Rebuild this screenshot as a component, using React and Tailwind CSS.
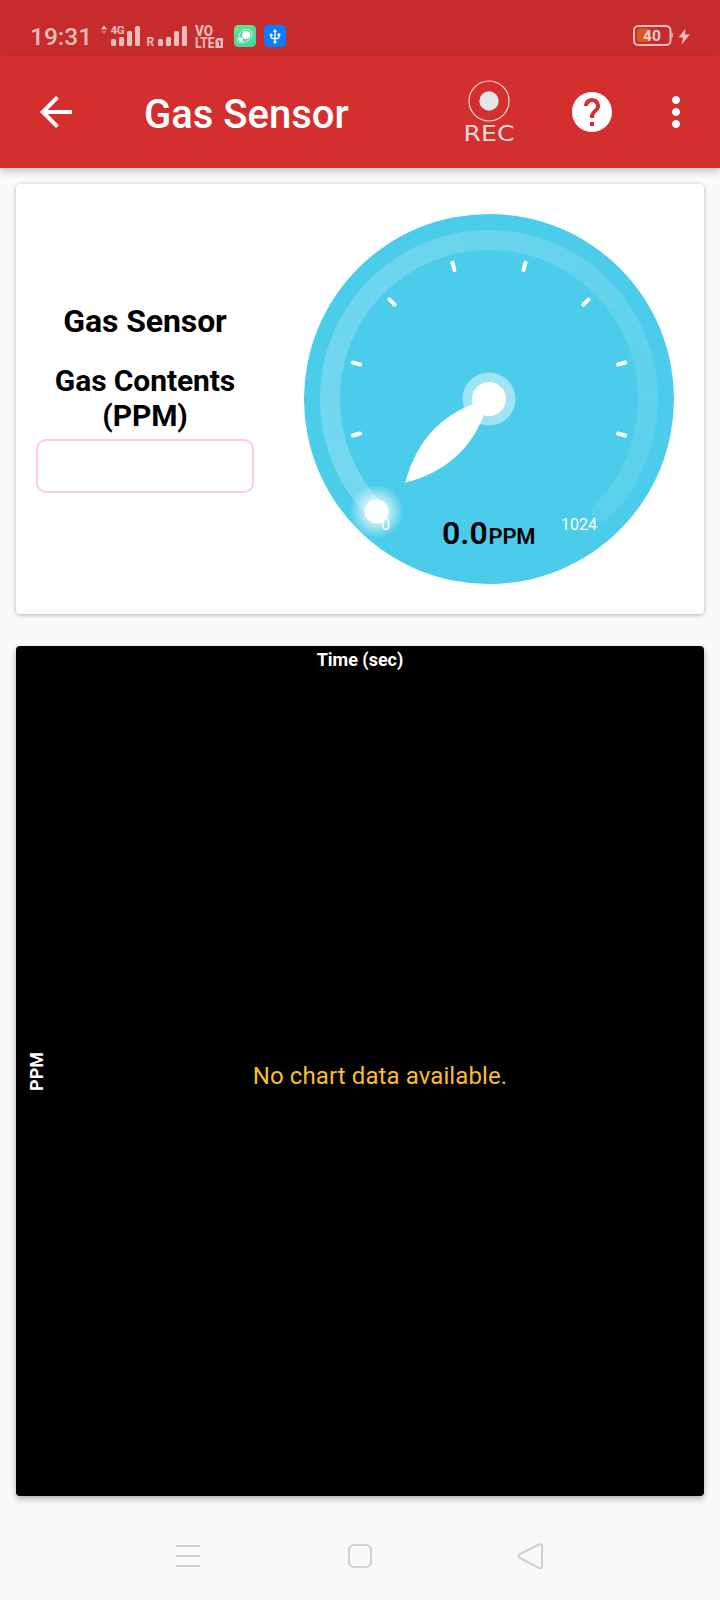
import React from "react";

const CX = 185;
const CY = 185;

function polar(r, deg) {
  const a = (deg * Math.PI) / 180;
  return [CX + r * Math.cos(a), CY + r * Math.sin(a)];
}

function StatusBar() {
  return (
    <div className="flex h-14 items-start bg-[#c62c2c] text-[#eebcbc]">
      <span className="ml-[30px] mt-[21px] w-[62px] whitespace-nowrap text-[24.5px] font-medium leading-[31px]">19:31</span>
      <svg className="ml-2 mt-5 shrink-0" width="190" height="32" viewBox="100 20 190 32" fill="#eebcbc">
        <path d="M104 25.500l3.200 3.800h-6.400z" />
        <path d="M104 34.300l3.200-3.800h-6.400z" opacity=".4" />
        <text x="110.500" y="34" fontSize="11.500" fontWeight="700" fontFamily="Roboto, sans-serif" textLength="14">4G</text>
        <rect x="111" y="39" width="5" height="7" rx="1.500" />
        <rect x="119" y="37" width="5" height="9" rx="1.500" />
        <rect x="127" y="31" width="5" height="15" rx="1.500" />
        <rect x="135" y="26" width="5" height="20" rx="1.500" />
        <text x="146.500" y="46" fontSize="12" fontWeight="600" fontFamily="Roboto, sans-serif">R</text>
        <rect x="158" y="39" width="5" height="7" rx="1.500" />
        <rect x="166" y="37" width="5" height="9" rx="1.500" />
        <rect x="174" y="31" width="5" height="15" rx="1.500" />
        <rect x="182" y="26" width="5" height="20" rx="1.500" />
        <text x="195" y="36" fontSize="14.500" fontWeight="800" fontFamily="Roboto, sans-serif" textLength="18" lengthAdjust="spacingAndGlyphs">VO</text>
        <text x="195" y="47.500" fontSize="14" fontWeight="800" fontFamily="Roboto, sans-serif" textLength="19.500" lengthAdjust="spacingAndGlyphs">LTE</text>
        <path fillRule="evenodd" d="M217.500 38h5.500v10h-7.500v-8zM218 40.500v1.500h1v4h1.500v-5.500z" />
        <defs>
          <linearGradient id="app" x1="0" y1="0" x2="0.4" y2="1">
            <stop offset="0" stopColor="#6ee08a" />
            <stop offset="1" stopColor="#45d6a5" />
          </linearGradient>
        </defs>
        <rect x="234" y="25" width="22" height="22" rx="4.500" fill="url(#app)" />
        <path d="M238.500 38.500C239 33 242 29.500 247 29.300c3 0 5 2 5 5 0 4.500-4 7-8.500 7.700-3 1.500-5.500.5-6-1.200-.1-1 .3-1.800 1-2.300z" fill="none" stroke="#fff" strokeWidth=".7" />
        <circle cx="246.200" cy="35" r="4" fill="#fff" />
        <circle cx="240.800" cy="39.500" r="2.200" fill="#fff" />
        <rect x="264" y="25" width="22" height="22" rx="4.500" fill="#0a7cff" />
        <path d="M275 31v11M271 35.500v1.500q0 1.500 1.500 1.500h5q1.500 0 1.500-1.500v-1.500" stroke="#fff" strokeWidth="1.300" fill="none" />
        <path d="M275 29l2.200 3h-4.400z" fill="#fff" />
        <circle cx="271.200" cy="35" r="1.600" fill="#fff" />
        <rect x="277.500" y="33.500" width="2.800" height="2.800" fill="#fff" />
        <circle cx="275" cy="42" r="1.500" fill="#fff" />
      </svg>
      <svg className="ml-auto mr-7 mt-5 shrink-0" width="62" height="32" viewBox="630 20 62 32">
        <rect x="637" y="28.500" width="13" height="13.500" rx="2.500" fill="#d85a20" />
        <rect x="634" y="26" width="36.500" height="19" rx="4.500" fill="none" stroke="#eebcbc" strokeWidth="2" />
        <path d="M671.500 32.500h.500q1 1 1 2.800t-1 2.700h-.500z" fill="#eebcbc" />
        <text x="652" y="41" textAnchor="middle" fontSize="15.500" fontWeight="700" fontFamily="Roboto, sans-serif" fill="#f3cfcf">40</text>
        <path d="M685.500 28.500l-7 9h4.500l-1.500 7 8.500-10h-5z" fill="#eebcbc" />
      </svg>
    </div>
  );
}

function AppBar() {
  return (
    <header className="relative flex h-28 items-center bg-[#d32f2f] text-white shadow-[0_4px_8px_rgba(0,0,0,0.2)]">
      <svg className="ml-8 shrink-0" width="48" height="48" viewBox="0 0 24 24" fill="currentColor">
        <path d="M20 11H7.830l5.590-5.590L12 4l-8 8 8 8 1.410-1.410L7.830 13H20v-2z" />
      </svg>
      <h1 className="ml-16 mt-1 w-[210px] whitespace-nowrap pt-0.5 text-[40px] font-medium leading-[48px]">Gas Sensor</h1>
      <svg className="ml-[106px] shrink-0" width="58" height="70" viewBox="460 77 58 70">
        <circle cx="489" cy="101" r="20" fill="none" stroke="#f6dada" strokeWidth="1.200" />
        <circle cx="489" cy="101" r="9.700" fill="#e6e6e6" />
        <text x="463.500" y="140.500" fontSize="22" fontFamily="'DejaVu Sans', sans-serif" fill="#efdcdc" textLength="51" lengthAdjust="spacingAndGlyphs">REC</text>
      </svg>
      <svg className="ml-[50px] shrink-0" width="48" height="48" viewBox="0 0 24 24" fill="currentColor">
        <path d="M12 2C6.480 2 2 6.480 2 12s4.480 10 10 10 10-4.480 10-10S17.520 2 12 2zm1 17h-2v-2h2v2zm2.070-7.750l-.9.920C13.450 12.900 13 13.500 13 15h-2v-.5c0-1.100.450-2.100 1.170-2.830l1.240-1.260c.370-.360.590-.860.590-1.410 0-1.100-.9-2-2-2s-2 .9-2 2H8c0-2.210 1.790-4 4-4s4 1.790 4 4c0 .880-.360 1.680-.930 2.250z" />
      </svg>
      <svg className="ml-9 shrink-0" width="48" height="48" viewBox="0 0 24 24" fill="currentColor">
        <path d="M12 8c1.100 0 2-.9 2-2s-.9-2-2-2-2 .9-2 2 .9 2 2 2zm0 2c-1.100 0-2 .9-2 2s.9 2 2 2 2-.9 2-2-.9-2-2-2zm0 6c-1.100 0-2 .9-2 2s.9 2 2 2 2-.9 2-2-.9-2-2-2z" />
      </svg>
    </header>
  );
}

function Gauge() {
  const steps = 90;
  const segments = Array.from({ length: steps }, (_, i) => {
    const a0 = 135 + (270 / steps) * i;
    const [x0, y0] = polar(159, a0);
    const [x1, y1] = polar(159, a0 + 270 / steps);
    return { d: `M${x0} ${y0}A159 159 0 0 1 ${x1} ${y1}`, o: 0.25 - (0.155 * i) / steps };
  });
  const ticks = [165, 195, 225, 255, 285, 315, 345, 375].map((a) => [...polar(133.5, a), ...polar(141, a)]);
  const [ex, ey] = polar(159, 45);
  const [dx, dy] = polar(159, 135);
  return (
    <svg width="370" height="370" viewBox="0 0 370 370" fontFamily="Roboto, sans-serif">
      <defs>
        <radialGradient id="glow">
          <stop offset="0.4" stopColor="#fff" stopOpacity="0.7" />
          <stop offset="1" stopColor="#fff" stopOpacity="0.06" />
        </radialGradient>
      </defs>
      <circle cx={CX} cy={CY} r="185" fill="#4accea" />
      {segments.map((s, i) => (
        <path key={i} d={s.d} stroke="#fff" strokeOpacity={s.o} strokeWidth="20" fill="none" />
      ))}
      <path transform={`translate(${ex} ${ey}) rotate(45)`} d="M10 0A10 10 0 0 1 -10 0z" fill="#fff" fillOpacity="0.095" />
      {ticks.map((t, i) => (
        <line key={i} x1={t[0]} y1={t[1]} x2={t[2]} y2={t[3]} stroke="#fff" strokeWidth="4" strokeLinecap="round" />
      ))}
      <circle cx={dx} cy={dy} r="26" fill="url(#glow)" />
      <circle cx={dx} cy={dy} r="12" fill="#fff" />
      <circle cx={CX} cy={CY} r="26.500" fill="#fff" fillOpacity="0.48" />
      <path transform={`rotate(-135 ${CX} ${CY})`} d="M185 185Q150 126 185 66.600Q220 126 185 185z" fill="#fff" />
      <circle cx={CX} cy={CY} r="17" fill="#fff" />
      <text x="77" y="316" fontSize="16" fill="#fff">0</text>
      <text x="257" y="316" fontSize="16" fill="#fff">1024</text>
      <text x="138" y="330" fontSize="32" fontWeight="600">0.0</text>
      <text x="184.500" y="330" fontSize="22" fontWeight="600" textLength="47">PPM</text>
    </svg>
  );
}

function NavBar() {
  return (
    <nav className="flex h-22 items-start justify-center bg-[#f9f9f9] pt-7">
      <svg width="400" height="32" viewBox="160 1540 400 32" fill="none" stroke="#d0d0d0" strokeWidth="2">
        <path d="M176 1546h24M176 1556h24M176 1566h24" />
        <rect x="349" y="1545" width="22" height="22" rx="5" />
        <path d="M539 1544.500L520 1554q-2.500 2 0 4L539 1568q3 1 3-2V1546.500q0-3-3-2z" strokeLinejoin="round" />
      </svg>
    </nav>
  );
}

export default function App() {
  return (
    <div className="flex h-[1600px] w-[720px] flex-col overflow-hidden bg-[#fafafa] font-[Roboto,sans-serif] text-black">
      <StatusBar />
      <AppBar />
      <main className="flex flex-1 flex-col gap-8 p-4">
        <section className="flex h-[430px] rounded bg-white shadow-[0_1px_4px_rgba(0,0,0,0.28)]">
          <div className="flex w-[258px] flex-col items-center px-5 pt-[118px] text-center font-bold">
            <h2 className="whitespace-nowrap text-[32px] font-bold leading-[38px] tracking-[-0.1px]">Gas Sensor</h2>
            <p className="mt-[23px] text-[30px] leading-[35px] tracking-[-0.1px]">Gas Contents (PPM)</p>
            <div className="mt-[6px] h-[54px] w-[218px] shrink-0 rounded-[10px] border-2 border-[#ffcdd2]" />
          </div>
          <div className="ml-[30px] mt-[30px]">
            <Gauge />
          </div>
        </section>
        <section className="flex h-[850px] flex-col rounded bg-black text-white shadow-[0_3px_6px_rgba(0,0,0,0.3)]">
          <h3 className="h-7 text-center text-[18px] font-bold leading-[28px]">Time (sec)</h3>
          <div className="flex flex-1 items-center pb-7">
            <span className="ml-[9px] w-6 rotate-180 text-[18px] font-bold leading-6 [writing-mode:vertical-rl]">PPM</span>
            <p className="flex-1 pl-[7px] pt-[10px] text-center text-2xl tracking-[0.1px] text-[#f7bd33]">No chart data available.</p>
          </div>
        </section>
      </main>
      <NavBar />
    </div>
  );
}
